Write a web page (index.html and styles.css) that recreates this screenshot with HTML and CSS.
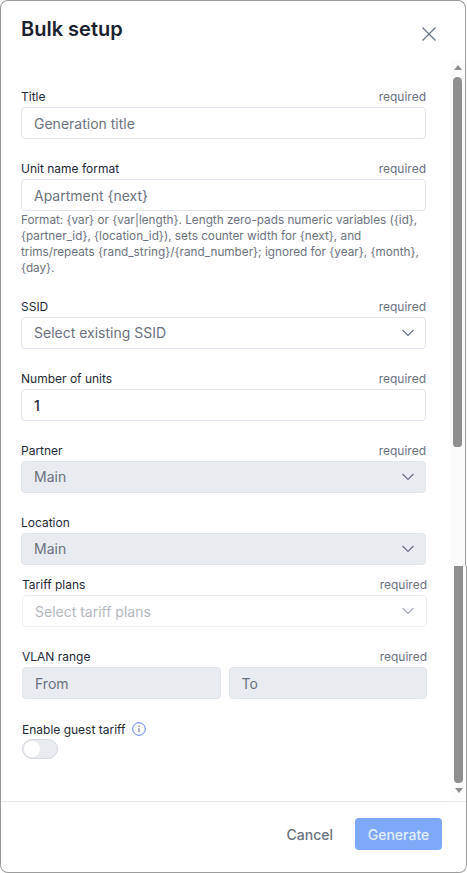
FILE: index.html
```html
<!DOCTYPE html>
<html lang="en">
<head>
    <meta charset="UTF-8">
    <meta name="viewport" content="width=device-width, initial-scale=1.0">
    <title>Bulk setup</title>
    <link rel="stylesheet" href="styles.css">
</head>
<body>
    <div class="sheet-upper">
        <div class="modal-header">
            <h1>Bulk setup</h1>
            <button type="button" class="close-btn" aria-label="Close">
                <svg width="16" height="16" viewBox="0 0 16 16"><path d="M1.5 1.5l13 13M14.500 1.500l-13 13" fill="none" stroke="#64748b" stroke-width="1.300"/></svg>
            </button>
        </div>
        <div class="pane">
            <form class="form form-upper">
                <div class="field">
                    <div class="label-row"><label for="title">Title</label><span class="req">required</span></div>
                    <input type="text" id="title" placeholder="Generation title">
                </div>
                <div class="field field-help">
                    <div class="label-row"><label for="unitName">Unit name format</label><span class="req">required</span></div>
                    <input type="text" id="unitName" placeholder="Apartment {next}">
                    <p class="help">Format: {var} or {var|length}. Length zero-pads numeric variables ({id}, {partner_id}, {location_id}), sets counter width for {next}, and trims/repeats {rand_string}/{rand_number}; ignored for {year}, {month}, {day}.</p>
                </div>
                <div class="field">
                    <div class="label-row"><label>SSID</label><span class="req">required</span></div>
                    <div class="select"><span>Select existing SSID</span><svg class="chevron" width="14" height="8" viewBox="0 0 14 8"><path d="M1.500 1l5.500 5.500L12.500 1" fill="none" stroke="#64748b" stroke-width="1.200"/></svg></div>
                </div>
                <div class="field">
                    <div class="label-row"><label for="units">Number of units</label><span class="req">required</span></div>
                    <input type="text" id="units" class="value" value="1">
                </div>
                <div class="field">
                    <div class="label-row"><label>Partner</label><span class="req">required</span></div>
                    <div class="select disabled"><span>Main</span><svg class="chevron" width="14" height="8" viewBox="0 0 14 8"><path d="M1.500 1l5.500 5.500L12.500 1" fill="none" stroke="#64748b" stroke-width="1.200"/></svg></div>
                </div>
                <div class="field">
                    <div class="label-row"><label>Location</label></div>
                    <div class="select disabled"><span>Main</span><svg class="chevron" width="14" height="8" viewBox="0 0 14 8"><path d="M1.500 1l5.500 5.500L12.500 1" fill="none" stroke="#64748b" stroke-width="1.200"/></svg></div>
                </div>
            </form>
            <div class="scrollbar">
                <div class="arrow-up"></div>
                <div class="thumb thumb-top"></div>
            </div>
        </div>
    </div>

    <div class="sheet-lower">
        <div class="pane">
            <form class="form form-lower">
                <div class="field">
                    <div class="label-row"><label>Tariff plans</label><span class="req">required</span></div>
                    <div class="select faded"><span>Select tariff plans</span><svg class="chevron" width="14" height="8" viewBox="0 0 14 8"><path d="M1.500 1l5.500 5.500L12.500 1" fill="none" stroke="#a3abb8" stroke-width="1.200"/></svg></div>
                </div>
                <div class="field">
                    <div class="label-row"><label>VLAN range</label><span class="req">required</span></div>
                    <div class="range">
                        <input type="text" placeholder="From" disabled>
                        <input type="text" placeholder="To" disabled>
                    </div>
                </div>
                <div class="guest-row">
                    <label>Enable guest tariff</label>
                    <svg width="14" height="14" viewBox="0 0 14 14"><circle cx="7" cy="7" r="6.300" fill="none" stroke="#5b7ff0" stroke-width="1"/><path d="M7 6.200v4" stroke="#5b6b8f" stroke-width="1.100"/><circle cx="7" cy="4.200" r=".7" fill="#5b6b8f"/></svg>
                </div>
                <div class="toggle"><div class="knob"></div></div>
            </form>
            <div class="scrollbar scrollbar-lower">
                <div class="thumb thumb-bottom"></div>
                <div class="arrow-down"></div>
            </div>
        </div>
        <div class="modal-footer">
            <button type="button" class="btn-cancel">Cancel</button>
            <button type="button" class="btn-generate">Generate</button>
        </div>
    </div>
</body>
</html>
```

FILE: styles.css
```css
* {
    box-sizing: border-box;
}

body {
    font-family: Inter, 'Noto Sans', sans-serif;
    background-color: white;
    color: #1f2937;
    margin: 0;
    width: 467px;
    height: 873px;
    overflow: hidden;
}

.sheet-upper {
    width: 466px;
    height: 566px;
    border: 1px solid #9c9c9c;
    border-bottom: none;
    border-radius: 8px 8px 0 0;
}

.sheet-lower {
    width: 467px;
    height: 307px;
    border: 1px solid #9c9c9c;
    border-top: none;
    border-radius: 0 0 8px 8px;
}

.modal-header {
    height: 59px;
    padding: 15px 28px 0 20px;
    display: flex;
    justify-content: space-between;
}

h1 {
    font-size: 20px;
    font-weight: 600;
    line-height: 26px;
    margin: 0;
    color: #1a2230;
}

.close-btn {
    width: 16px;
    height: 16px;
    margin-top: 10px;
    padding: 0;
    border: none;
    background: none;
    display: flex;
}

.pane {
    display: flex;
}

.form {
    width: 449px;
    padding-left: 20px;
    padding-right: 24px;
}

.form-upper {
    padding-top: 27px;
}

.sheet-lower .pane {
    height: 235px;
}

.sheet-lower .form {
    margin-left: 1px;
    padding-top: 9px;
}

.field {
    margin-bottom: 20px;
}

.field-help {
    margin-bottom: 21px;
}

.label-row {
    display: flex;
    justify-content: space-between;
    align-items: center;
    height: 20px;
    padding-bottom: 2px;
}

label {
    font-size: 12px;
    color: #1f2937;
}

.req {
    font-size: 12px;
    color: #6b7280;
}

input,
.select {
    width: 100%;
    height: 32px;
    padding: 0 12px;
    border: 1px solid #e1e4ee;
    border-radius: 4px;
    background-color: white;
    font-family: inherit;
    font-size: 14px;
    color: #1f2937;
    display: flex;
    align-items: center;
}

input::placeholder {
    color: #6b7280;
    opacity: 1;
}

.value {
    font-weight: 500;
}

.select {
    justify-content: space-between;
    color: #6b7280;
    padding-bottom: 1px;
}

.chevron {
    margin-right: -2px;
}

.disabled,
input:disabled {
    background-color: #e8ebef;
    border-color: #e2e5ea;
}

.faded {
    border-color: #eceef2;
    color: #b4b8bf;
    padding-bottom: 0;
}

.faded .chevron {
    margin-right: -1px;
}

.help {
    font-size: 11.750px;
    line-height: 16px;
    color: #6b7280;
    margin: 1px 0 0;
}

.range {
    display: flex;
    gap: 8px;
}

.guest-row {
    display: flex;
    align-items: center;
    gap: 6px;
    height: 20px;
}

.toggle {
    width: 36px;
    height: 20px;
    border: 1px solid #d5d9df;
    border-radius: 10px;
    background-color: #e8ebef;
    padding: 1px;
}

.knob {
    width: 16px;
    height: 16px;
    border-radius: 50%;
    background-color: white;
}

.scrollbar {
    width: 15px;
    height: 506px;
    background-color: #fbfbfb;
    display: flex;
    flex-direction: column;
    align-items: center;
}

.scrollbar-lower {
    height: 235px;
    background-color: #fdfdfd;
}

.arrow-up,
.arrow-down {
    width: 0;
    height: 0;
    border-left: 4.500px solid transparent;
    border-right: 4.500px solid transparent;
}

.arrow-up {
    border-bottom: 5px solid #8f8f8f;
    margin-top: 5px;
}

.arrow-down {
    border-top: 5px solid #8f8f8f;
    margin-top: 5px;
}

.thumb {
    width: 9px;
    background-color: #8f8f8f;
}

.thumb-top {
    height: 370px;
    margin-top: 7px;
    border-radius: 5px 5px 4px 4px;
}

.thumb-bottom {
    height: 217px;
    border-radius: 0 0 4px 4px;
}

.modal-footer {
    height: 71px;
    border-top: 1px solid #e6e7ea;
    padding: 16px 24px 0 0;
    display: flex;
    justify-content: flex-end;
    gap: 22px;
}

.modal-footer button {
    height: 32px;
    border: none;
    border-radius: 4px;
    font-family: inherit;
    font-size: 14px;
    font-weight: 500;
}

.btn-cancel {
    background: none;
    color: #6b7280;
    padding: 0;
}

.btn-generate {
    width: 87px;
    padding: 0;
    background-color: #7ea9f8;
    color: #e3edfe;
}
```
